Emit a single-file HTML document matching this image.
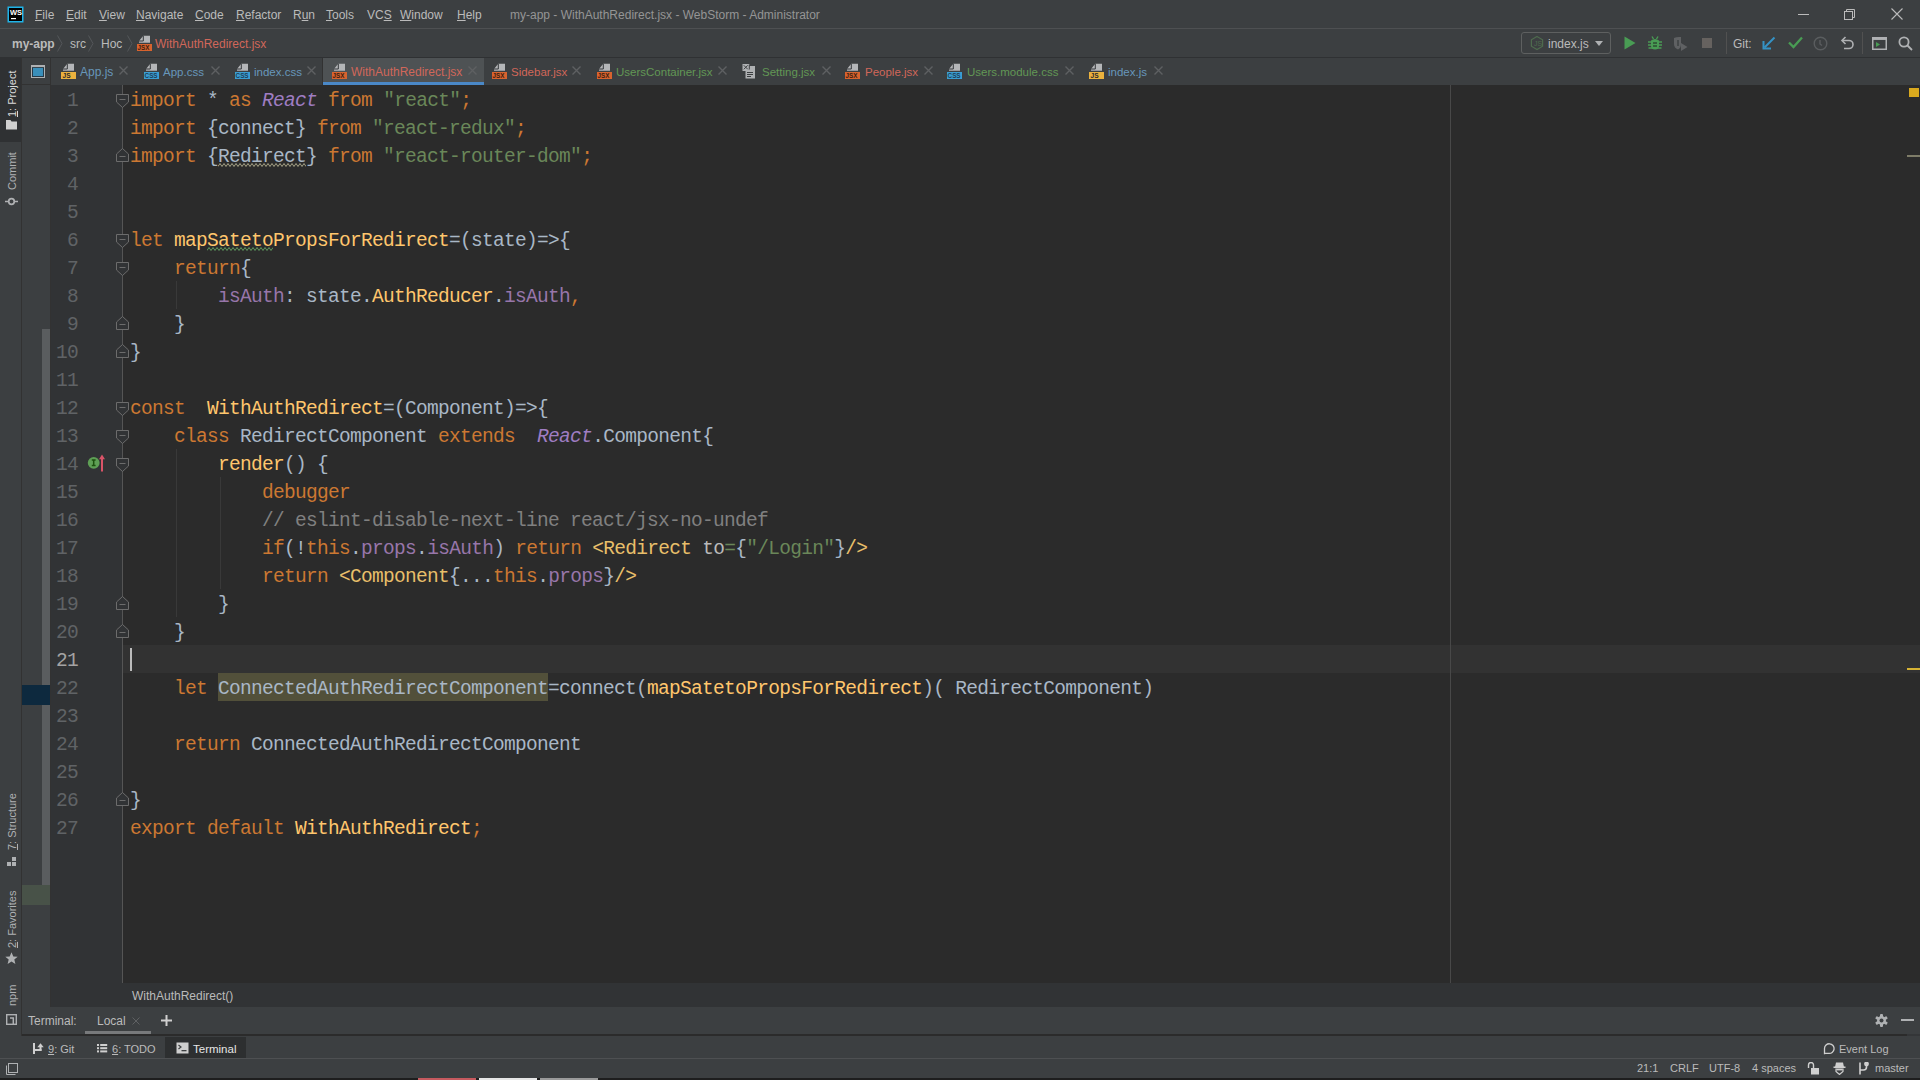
<!DOCTYPE html>
<html><head><meta charset="utf-8">
<style>
*{margin:0;padding:0;box-sizing:border-box}
html,body{width:1920px;height:1080px;overflow:hidden;background:#3C3F41}
body{position:relative;font-family:"Liberation Sans",sans-serif;font-size:12px;color:#BBBBBB}
.a{position:absolute}
.t{position:absolute;white-space:pre;line-height:16px}
#code{position:absolute;left:130px;top:87px;font-family:"Liberation Mono",monospace;font-size:19.5px;letter-spacing:-0.7px;line-height:28px;white-space:pre;color:#A9B7C6}
#nums{position:absolute;left:52px;width:26px;top:87px;font-family:"Liberation Mono",monospace;font-size:19.5px;letter-spacing:-0.7px;line-height:28px;white-space:pre;color:#606366;text-align:right}
.k{color:#CC7832}.f{color:#FFC66D}.s{color:#6A8759}.p{color:#9876AA}.r{color:#9F7DC2;font-style:italic}.c{color:#808080}.g{color:#E8BF6A}.at{color:#BABABA}
.tab{position:absolute;top:57px;height:27px}
.tt{position:absolute;top:64px;white-space:pre;line-height:16px;font-size:11.5px}
.x{position:absolute;top:66px;width:9px;height:9px}
</style></head><body>

<!-- title bar -->
<div class="a" style="left:0;top:0;width:1920px;height:28px;background:#3C3F41"></div>
<div class="a" style="left:0;top:28px;width:1920px;height:1px;background:#4E5052"></div>

<!-- nav bar -->
<div class="a" style="left:0;top:57px;width:1920px;height:1px;background:#2F3133"></div>

<!-- left tool strip -->
<div class="a" style="left:0;top:58px;width:21px;height:978px;background:#3C3F41"></div>
<div class="a" style="left:21px;top:58px;width:1px;height:978px;background:#323232"></div>
<div class="a" style="left:0;top:58px;width:21px;height:84px;background:#2F3133"></div>

<!-- project panel (narrow) -->
<div class="a" style="left:22px;top:58px;width:29px;height:949px;background:#3C3F41"></div>
<div class="a" style="left:50px;top:58px;width:1px;height:949px;background:#323232"></div>
<div class="a" style="left:22px;top:84px;width:28px;height:1px;background:#323232"></div>
<div class="a" style="left:42px;top:329px;width:8px;height:558px;background:#5A5D5F"></div>
<div class="a" style="left:22px;top:685px;width:28px;height:20px;background:#0D293E"></div>
<div class="a" style="left:22px;top:885px;width:28px;height:20px;background:#485248"></div>

<!-- tab bar -->
<div class="a" style="left:51px;top:58px;width:1869px;height:27px;background:#3C3F41"></div>
<div class="a" style="left:323px;top:58px;width:161px;height:27px;background:#4E5254"></div>
<div class="a" style="left:322px;top:58px;width:1px;height:27px;background:#323232"></div>
<div class="a" style="left:323px;top:82px;width:161px;height:3px;background:#4A88C7"></div>

<!-- gutter -->
<div class="a" style="left:51px;top:85px;width:71px;height:898px;background:#313335"></div>
<div class="a" style="left:122px;top:85px;width:1px;height:898px;background:#555555"></div>
<!-- editor -->
<div class="a" style="left:123px;top:85px;width:1797px;height:898px;background:#2B2B2B"></div>
<div class="a" style="left:123px;top:645px;width:1797px;height:28px;background:#323232"></div>
<div class="a" style="left:218px;top:673px;width:330px;height:28px;background:#52503A"></div>
<div class="a" style="left:1450px;top:85px;width:1px;height:898px;background:#484848"></div>

<!-- breadcrumb bar -->
<div class="a" style="left:51px;top:983px;width:1869px;height:24px;background:#313335"></div>

<!-- terminal header -->
<div class="a" style="left:22px;top:1007px;width:1898px;height:27px;background:#3C3F41"></div>
<div class="a" style="left:22px;top:1034px;width:1885px;height:2px;background:#2B2B2B"></div><div class="a" style="left:1907px;top:1034px;width:13px;height:2px;background:#343638"></div>
<!-- tool window bar -->
<div class="a" style="left:0;top:1036px;width:1920px;height:22px;background:#3C3F41"></div>
<div class="a" style="left:165px;top:1037px;width:81px;height:21px;background:#2D2F30"></div>
<!-- status bar -->
<div class="a" style="left:0;top:1058px;width:1920px;height:1px;background:#4E5052"></div>
<div class="a" style="left:0;top:1078px;width:1920px;height:2px;background:#1E1E1E"></div>


<svg class="a" style="left:116px;top:94px" width="13" height="14" viewBox="0 0 13 14"><path d="M0.5 0.5H12.5V8L6.5 13.5L0.5 8Z" fill="#313335" stroke="#6C6C6C"/><path d="M3.5 5.5H9.5" stroke="#6C6C6C"/></svg>
<svg class="a" style="left:116px;top:234px" width="13" height="14" viewBox="0 0 13 14"><path d="M0.5 0.5H12.5V8L6.5 13.5L0.5 8Z" fill="#313335" stroke="#6C6C6C"/><path d="M3.5 5.5H9.5" stroke="#6C6C6C"/></svg>
<svg class="a" style="left:116px;top:262px" width="13" height="14" viewBox="0 0 13 14"><path d="M0.5 0.5H12.5V8L6.5 13.5L0.5 8Z" fill="#313335" stroke="#6C6C6C"/><path d="M3.5 5.5H9.5" stroke="#6C6C6C"/></svg>
<svg class="a" style="left:116px;top:402px" width="13" height="14" viewBox="0 0 13 14"><path d="M0.5 0.5H12.5V8L6.5 13.5L0.5 8Z" fill="#313335" stroke="#6C6C6C"/><path d="M3.5 5.5H9.5" stroke="#6C6C6C"/></svg>
<svg class="a" style="left:116px;top:430px" width="13" height="14" viewBox="0 0 13 14"><path d="M0.5 0.5H12.5V8L6.5 13.5L0.5 8Z" fill="#313335" stroke="#6C6C6C"/><path d="M3.5 5.5H9.5" stroke="#6C6C6C"/></svg>
<svg class="a" style="left:116px;top:458px" width="13" height="14" viewBox="0 0 13 14"><path d="M0.5 0.5H12.5V8L6.5 13.5L0.5 8Z" fill="#313335" stroke="#6C6C6C"/><path d="M3.5 5.5H9.5" stroke="#6C6C6C"/></svg>
<svg class="a" style="left:116px;top:148px" width="13" height="14" viewBox="0 0 13 14"><path d="M0.5 13.5H12.5V6L6.5 0.5L0.5 6Z" fill="#313335" stroke="#6C6C6C"/><path d="M3.5 8.5H9.5" stroke="#6C6C6C"/></svg>
<svg class="a" style="left:116px;top:316px" width="13" height="14" viewBox="0 0 13 14"><path d="M0.5 13.5H12.5V6L6.5 0.5L0.5 6Z" fill="#313335" stroke="#6C6C6C"/><path d="M3.5 8.5H9.5" stroke="#6C6C6C"/></svg>
<svg class="a" style="left:116px;top:344px" width="13" height="14" viewBox="0 0 13 14"><path d="M0.5 13.5H12.5V6L6.5 0.5L0.5 6Z" fill="#313335" stroke="#6C6C6C"/><path d="M3.5 8.5H9.5" stroke="#6C6C6C"/></svg>
<svg class="a" style="left:116px;top:596px" width="13" height="14" viewBox="0 0 13 14"><path d="M0.5 13.5H12.5V6L6.5 0.5L0.5 6Z" fill="#313335" stroke="#6C6C6C"/><path d="M3.5 8.5H9.5" stroke="#6C6C6C"/></svg>
<svg class="a" style="left:116px;top:624px" width="13" height="14" viewBox="0 0 13 14"><path d="M0.5 13.5H12.5V6L6.5 0.5L0.5 6Z" fill="#313335" stroke="#6C6C6C"/><path d="M3.5 8.5H9.5" stroke="#6C6C6C"/></svg>
<svg class="a" style="left:116px;top:792px" width="13" height="14" viewBox="0 0 13 14"><path d="M0.5 13.5H12.5V6L6.5 0.5L0.5 6Z" fill="#313335" stroke="#6C6C6C"/><path d="M3.5 8.5H9.5" stroke="#6C6C6C"/></svg>
<div class="a" style="left:176px;top:281px;width:1px;height:28px;background:#393939"></div>
<div class="a" style="left:176px;top:449px;width:1px;height:168px;background:#393939"></div>
<div class="a" style="left:220px;top:477px;width:1px;height:112px;background:#393939"></div>
<div id="nums">1
2
3
4
5
6
7
8
9
10
11
12
13
14
15
16
17
18
19
20
<span style="color:#A4A3A3">21</span>
22
23
24
25
26
27</div>

<div id="code"><span class="k">import</span> * <span class="k">as</span> <span class="r">React</span> <span class="k">from</span> <span class="s">"react"</span><span class="k">;</span>
<span class="k">import</span> {connect} <span class="k">from</span> <span class="s">"react-redux"</span><span class="k">;</span>
<span class="k">import</span> {Redirect} <span class="k">from</span> <span class="s">"react-router-dom"</span><span class="k">;</span>


<span class="k">let</span> <span class="f">mapSatetoPropsForRedirect</span>=(state)=>{
    <span class="k">return</span>{
        <span class="p">isAuth</span>: state.<span class="f">AuthReducer</span>.<span class="p">isAuth</span><span class="k">,</span>
    }
}

<span class="k">const</span>  <span class="f">WithAuthRedirect</span>=(Component)=>{
    <span class="k">class</span> RedirectComponent <span class="k">extends</span>  <span class="r">React</span>.Component{
        <span class="f">render</span>() {
            <span class="k">debugger</span>
            <span class="c">// eslint-disable-next-line react/jsx-no-undef</span>
            <span class="k">if</span>(!<span class="k">this</span>.<span class="p">props</span>.<span class="p">isAuth</span>) <span class="k">return</span> <span class="g">&lt;Redirect</span> <span class="at">to</span><span class="s">=</span>{<span class="s">"/Login"</span>}<span class="g">/&gt;</span>
            <span class="k">return</span> <span class="g">&lt;Component</span>{...<span class="k">this</span>.<span class="p">props</span>}<span class="g">/&gt;</span>
        }
    }

    <span class="k">let</span> ConnectedAuthRedirectComponent=connect(<span class="f">mapSatetoPropsForRedirect</span>)( RedirectComponent)

    <span class="k">return</span> ConnectedAuthRedirectComponent

}
<span class="k">export default</span> <span class="f">WithAuthRedirect</span><span class="k">;</span></div>

<!-- ============ SYMBOLS ============ -->
<svg width="0" height="0" style="position:absolute">
<defs>
<symbol id="page" viewBox="0 0 16 16"><path d="M7.3 0.8H14V7.8H3V6Z" fill="#B4B6B8"/><path d="M7.3 0.8V6H3" fill="none" stroke="#34373A" stroke-width="1"/></symbol>
<symbol id="ijs" viewBox="0 0 16 16"><use href="#page"/><rect x="1" y="9" width="15" height="7" fill="#EAB13E"/><text x="2.6" y="15.3" font-family="Liberation Sans" font-weight="bold" font-size="6.6" fill="#2B2B2B">JS</text></symbol>
<symbol id="icss" viewBox="0 0 16 16"><use href="#page"/><rect x="1" y="9" width="15" height="7" fill="#3A9DD3"/><text x="1.6" y="15.3" font-family="Liberation Sans" font-weight="bold" font-size="6.3" fill="#1E3F57">CSS</text></symbol>
<symbol id="ijsx" viewBox="0 0 16 16"><use href="#page"/><rect x="1" y="9" width="15" height="7" fill="#D8632E"/><text x="1.6" y="15.3" font-family="Liberation Sans" font-weight="bold" font-size="6.3" fill="#3B1D10">JSX</text></symbol>
<symbol id="ixcl" viewBox="0 0 16 16"><rect x="4.5" y="3" width="9.5" height="12.5" fill="#AFB1B3"/><rect x="1.5" y="1" width="7" height="7" fill="#AFB1B3"/><path d="M2.8 2.3L6.8 6.3M6.8 2.3L2.8 6.3" stroke="#3C3F41" stroke-width="1"/><path d="M8.3 1.5V6.5M6 9.5H12M6 11.5H12M6 13.5H10" stroke="#3C3F41" stroke-width="1"/></symbol>
<symbol id="cls" viewBox="0 0 9 9"><path d="M0.5 0.5L8.5 8.5M8.5 0.5L0.5 8.5" stroke="#5E6062" stroke-width="1.4"/></symbol>
</defs>
</svg>

<!-- ============ TAB BAR ============ -->
<svg class="a" style="left:31px;top:65px" width="14" height="13" viewBox="0 0 14 13"><rect x="0.5" y="0.5" width="13" height="12" fill="#263A48" stroke="#AFB1B3" stroke-width="1"/><rect x="0.5" y="0.5" width="13" height="1.6" fill="#AFB1B3"/><rect x="2" y="3" width="10" height="8" fill="#3A8FBA"/></svg>
<div class="a" style="left:50px;top:58px;width:1px;height:27px;background:#323232"></div>

<svg class="a" style="left:60px;top:63px" width="16" height="16"><use href="#ijs"/></svg>
<div class="tt" style="left:80px;color:#6897BB;font-size:12px">App.js</div>
<svg class="x" style="left:119px"><use href="#cls"/></svg>

<svg class="a" style="left:143px;top:63px" width="16" height="16"><use href="#icss"/></svg>
<div class="tt" style="left:163px;color:#6897BB">App.css</div>
<svg class="x" style="left:211px"><use href="#cls"/></svg>

<svg class="a" style="left:234px;top:63px" width="16" height="16"><use href="#icss"/></svg>
<div class="tt" style="left:254px;color:#6897BB">index.css</div>
<svg class="x" style="left:307px"><use href="#cls"/></svg>

<svg class="a" style="left:331px;top:63px" width="16" height="16"><use href="#ijsx"/></svg>
<div class="tt" style="left:351px;color:#D1675A;font-size:12px">WithAuthRedirect.jsx</div>
<svg class="x" style="left:468px"><use href="#cls"/></svg>

<svg class="a" style="left:491px;top:63px" width="16" height="16"><use href="#ijsx"/></svg>
<div class="tt" style="left:511px;color:#D1675A">Sidebar.jsx</div>
<svg class="x" style="left:572px"><use href="#cls"/></svg>

<svg class="a" style="left:596px;top:63px" width="16" height="16"><use href="#ijsx"/></svg>
<div class="tt" style="left:616px;color:#629755">UsersContainer.jsx</div>
<svg class="x" style="left:718px"><use href="#cls"/></svg>

<svg class="a" style="left:741px;top:63px" width="16" height="16"><use href="#ixcl"/></svg>
<div class="tt" style="left:762px;color:#629755">Setting.jsx</div>
<svg class="x" style="left:822px"><use href="#cls"/></svg>

<svg class="a" style="left:844px;top:63px" width="16" height="16"><use href="#ijsx"/></svg>
<div class="tt" style="left:865px;color:#D1675A">People.jsx</div>
<svg class="x" style="left:924px"><use href="#cls"/></svg>

<svg class="a" style="left:946px;top:63px" width="16" height="16"><use href="#icss"/></svg>
<div class="tt" style="left:967px;color:#629755">Users.module.css</div>
<svg class="x" style="left:1065px"><use href="#cls"/></svg>

<svg class="a" style="left:1088px;top:63px" width="16" height="16"><use href="#ijs"/></svg>
<div class="tt" style="left:1108px;color:#6897BB">index.js</div>
<svg class="x" style="left:1154px"><use href="#cls"/></svg>
<!-- ============ TITLE BAR ============ -->
<svg class="a" style="left:7px;top:6px" width="17" height="17" viewBox="0 0 17 17">
<rect x="0.5" y="0.5" width="16" height="16" fill="#1FB3E8"/>
<rect x="2" y="2" width="13" height="13" fill="#000"/>
<text x="3" y="9.3" font-family="Liberation Sans" font-weight="bold" font-size="7.5" fill="#fff">WS</text>
<rect x="4" y="12" width="5" height="1.2" fill="#fff"/>
</svg>
<div class="t" style="left:35px;top:7px"><u>F</u>ile</div>
<div class="t" style="left:66px;top:7px"><u>E</u>dit</div>
<div class="t" style="left:99px;top:7px"><u>V</u>iew</div>
<div class="t" style="left:136px;top:7px"><u>N</u>avigate</div>
<div class="t" style="left:195px;top:7px"><u>C</u>ode</div>
<div class="t" style="left:236px;top:7px"><u>R</u>efactor</div>
<div class="t" style="left:293px;top:7px">R<u>u</u>n</div>
<div class="t" style="left:326px;top:7px"><u>T</u>ools</div>
<div class="t" style="left:367px;top:7px">VC<u>S</u></div>
<div class="t" style="left:400px;top:7px"><u>W</u>indow</div>
<div class="t" style="left:457px;top:7px"><u>H</u>elp</div>
<div class="t" style="left:510px;top:7px;color:#959595">my-app - WithAuthRedirect.jsx - WebStorm - Administrator</div>
<div class="a" style="left:1798px;top:14px;width:11px;height:1px;background:#BBBBBB"></div>
<svg class="a" style="left:1844px;top:9px" width="12" height="12" viewBox="0 0 12 12" fill="none" stroke="#BBBBBB" stroke-width="1"><rect x="0.5" y="2.5" width="8" height="8"/><path d="M2.5 2.5V0.5H10.5V8.5H8.5"/></svg>
<svg class="a" style="left:1891px;top:8px" width="12" height="12" viewBox="0 0 12 12" stroke="#BBBBBB" stroke-width="1.1"><path d="M0.5 0.5L11.5 11.5M11.5 0.5L0.5 11.5"/></svg>

<!-- ============ NAV BAR ============ -->
<div class="t" style="left:12px;top:36px;font-weight:bold">my-app</div>
<svg class="a" style="left:57px;top:35px" width="6" height="17" viewBox="0 0 6 17" fill="none" stroke="#54575A"><path d="M0.5 0.5L5 8.5L0.5 16.5"/></svg>
<div class="t" style="left:70px;top:36px">src</div>
<svg class="a" style="left:88px;top:35px" width="6" height="17" viewBox="0 0 6 17" fill="none" stroke="#54575A"><path d="M0.5 0.5L5 8.5L0.5 16.5"/></svg>
<div class="t" style="left:101px;top:36px">Hoc</div>
<svg class="a" style="left:127px;top:35px" width="6" height="17" viewBox="0 0 6 17" fill="none" stroke="#54575A"><path d="M0.5 0.5L5 8.5L0.5 16.5"/></svg>
<svg class="a" style="left:136px;top:35px" width="16" height="16"><use href="#ijsx"/></svg>
<div class="t" style="left:155px;top:36px;color:#D1675A">WithAuthRedirect.jsx</div>

<!-- run config combo -->
<div class="a" style="left:1521px;top:32px;width:90px;height:22px;border:1px solid #5E6060;border-radius:3px"></div>
<svg class="a" style="left:1529px;top:35px" width="16" height="16" viewBox="0 0 16 16" fill="none" stroke="#4E6B4E" stroke-width="1.2"><path d="M8 1.5L13.6 4.75V11.25L8 14.5L2.4 11.25V4.75Z"/><text x="5" y="11" font-size="7" fill="#4E6B4E" stroke="none" font-family="Liberation Sans">JS</text></svg>
<div class="t" style="left:1548px;top:36px">index.js</div>
<svg class="a" style="left:1595px;top:41px" width="8" height="6" viewBox="0 0 8 6"><path d="M0 0H8L4 5Z" fill="#AFB1B3"/></svg>
<!-- run -->
<svg class="a" style="left:1623px;top:36px" width="14" height="14" viewBox="0 0 14 14"><path d="M1.5 0.5L12.5 7L1.5 13.5Z" fill="#499C54"/></svg>
<!-- debug bug -->
<svg class="a" style="left:1648px;top:36px" width="14" height="14" viewBox="0 0 14 14"><path d="M4 0.5L5.5 3M10 0.5L8.5 3" stroke="#499C54" stroke-width="1.4"/><path d="M3 4.5Q7 1.5 11 4.5V10Q11 13.5 7 13.5Q3 13.5 3 10Z" fill="#499C54"/><path d="M0 6H14M0 9H14M0.5 12H13.5" stroke="#499C54" stroke-width="1.3"/><path d="M0 7.5H2.8M11.2 7.5H14M0 10.5H2.8M11.2 10.5H14" stroke="#3C3F41" stroke-width="1.2"/><rect x="5" y="6.3" width="4" height="1.4" fill="#2C4A30"/><rect x="5" y="9.3" width="4" height="1.4" fill="#2C4A30"/></svg>
<!-- coverage (gray) -->
<svg class="a" style="left:1673px;top:36px" width="16" height="16" viewBox="0 0 16 16"><path d="M1 2Q4 0.5 8 1V8Q8 12 5 13.5Q1 12 1 8Z" fill="#5F6163"/><path d="M5 4V10" stroke="#3C3F41" stroke-width="1.4"/><path d="M8 7L14.5 11L8 15Z" fill="#5F6163"/></svg>
<!-- stop -->
<div class="a" style="left:1702px;top:38px;width:10px;height:10px;background:#66625F"></div>
<div class="a" style="left:1726px;top:32px;width:1px;height:22px;background:#515151"></div>
<div class="t" style="left:1733px;top:36px">Git:</div>
<!-- update arrow -->
<svg class="a" style="left:1762px;top:36px" width="14" height="14" viewBox="0 0 14 14" fill="none" stroke="#3592C4" stroke-width="2"><path d="M12.5 1.5L2.5 11.5"/><path d="M1.5 5V12.5H9" stroke-linejoin="miter"/></svg>
<!-- commit check -->
<svg class="a" style="left:1788px;top:36px" width="15" height="13" viewBox="0 0 15 13" fill="none" stroke="#499C54" stroke-width="2.3"><path d="M1 6.5L5.5 11L14 1.5"/></svg>
<!-- history clock gray -->
<svg class="a" style="left:1813px;top:36px" width="15" height="15" viewBox="0 0 15 15" fill="none" stroke="#5A5D5F" stroke-width="1.4"><circle cx="7.5" cy="7.5" r="6.3"/><path d="M7 4V8L9 9.5"/></svg>
<!-- rollback -->
<svg class="a" style="left:1840px;top:36px" width="15" height="15" viewBox="0 0 15 15" fill="none" stroke="#AFB1B3" stroke-width="1.6"><path d="M3 4.5H9A4 4 0 0 1 9 12.5H4"/><path d="M5.5 1L2 4.5L5.5 8"/></svg>
<div class="a" style="left:1862px;top:32px;width:1px;height:22px;background:#515151"></div>
<!-- run anything / terminal window -->
<svg class="a" style="left:1872px;top:37px" width="15" height="13" viewBox="0 0 15 13"><rect x="0.75" y="0.75" width="13.5" height="11.5" fill="none" stroke="#AFB1B3" stroke-width="1.5"/><rect x="0.75" y="0.75" width="13.5" height="2.2" fill="#AFB1B3"/><path d="M4 5L8 7.5L4 10Z" fill="#499C54"/></svg>
<!-- search -->
<svg class="a" style="left:1898px;top:36px" width="15" height="15" viewBox="0 0 15 15" fill="none" stroke="#AFB1B3" stroke-width="1.8"><circle cx="6" cy="6" r="4.6"/><path d="M9.5 9.5L14 14"/></svg>
<!-- ============ LEFT STRIP LABELS ============ -->
<div class="t" style="left:4px;top:117px;font-size:11px;color:#DADADA;transform-origin:0 0;transform:rotate(-90deg)"><u>1</u>: Project</div>
<svg class="a" style="left:6px;top:119px" width="11" height="11" viewBox="0 0 11 11"><path d="M0 1H4.5L5.5 2.5H11V10.5H0Z" fill="#D0D0D0"/></svg>
<div class="t" style="left:4px;top:190px;font-size:11px;color:#AFB1B3;transform-origin:0 0;transform:rotate(-90deg)">Commit</div>
<svg class="a" style="left:5px;top:197px" width="13" height="9" viewBox="0 0 13 9" fill="none" stroke="#AFB1B3" stroke-width="1.7"><path d="M0 4.5H3.6M9.4 4.5H13"/><circle cx="6.5" cy="4.5" r="2.8"/></svg>
<div class="t" style="left:4px;top:850px;font-size:11px;color:#AFB1B3;transform-origin:0 0;transform:rotate(-90deg)"><u>7</u>: Structure</div>
<svg class="a" style="left:7px;top:857px" width="10" height="10" viewBox="0 0 10 10" fill="#AFB1B3"><rect x="0" y="5" width="4" height="4"/><rect x="5" y="5" width="4" height="4"/><rect x="5" y="0" width="4" height="4"/></svg>
<div class="t" style="left:4px;top:948px;font-size:11px;color:#AFB1B3;transform-origin:0 0;transform:rotate(-90deg)"><u>2</u>: Favorites</div>
<svg class="a" style="left:5px;top:952px" width="13" height="13" viewBox="0 0 13 13"><path d="M6.5 0.3L8.3 4.4L12.7 4.7L9.3 7.6L10.4 12L6.5 9.6L2.6 12L3.7 7.6L0.3 4.7L4.7 4.4Z" fill="#AFB1B3"/></svg>
<div class="t" style="left:4px;top:1006px;font-size:11px;color:#AFB1B3;transform-origin:0 0;transform:rotate(-90deg)">npm</div>
<svg class="a" style="left:6px;top:1014px" width="11" height="11" viewBox="0 0 11 11" fill="none" stroke="#AFB1B3" stroke-width="1.4"><rect x="0.7" y="0.7" width="9.6" height="9.6"/><path d="M4 4H7.3V10.3" stroke-width="1.5"/></svg>

<!-- ============ EDITOR EXTRAS ============ -->
<!-- wavy underlines -->
<svg class="a" style="left:218px;top:163px" width="88" height="4" viewBox="0 0 88 4"><path d="M0 3.5 L2 0.5 L4 3.5 L6 0.5 L8 3.5 L10 0.5 L12 3.5 L14 0.5 L16 3.5 L18 0.5 L20 3.5 L22 0.5 L24 3.5 L26 0.5 L28 3.5 L30 0.5 L32 3.5 L34 0.5 L36 3.5 L38 0.5 L40 3.5 L42 0.5 L44 3.5 L46 0.5 L48 3.5 L50 0.5 L52 3.5 L54 0.5 L56 3.5 L58 0.5 L60 3.5 L62 0.5 L64 3.5 L66 0.5 L68 3.5 L70 0.5 L72 3.5 L74 0.5 L76 3.5 L78 0.5 L80 3.5 L82 0.5 L84 3.5 L86 0.5 L88 3.5" fill="none" stroke="#A6A287" stroke-width="1"/></svg>
<svg class="a" style="left:207px;top:247px" width="66" height="4" viewBox="0 0 66 4"><path d="M0 3.5 L2 0.5 L4 3.5 L6 0.5 L8 3.5 L10 0.5 L12 3.5 L14 0.5 L16 3.5 L18 0.5 L20 3.5 L22 0.5 L24 3.5 L26 0.5 L28 3.5 L30 0.5 L32 3.5 L34 0.5 L36 3.5 L38 0.5 L40 3.5 L42 0.5 L44 3.5 L46 0.5 L48 3.5 L50 0.5 L52 3.5 L54 0.5 L56 3.5 L58 0.5 L60 3.5 L62 0.5 L64 3.5 L66 0.5" fill="none" stroke="#5F9A5F" stroke-width="1"/></svg>
<!-- gutter icons line 14 -->
<svg class="a" style="left:87px;top:454px" width="20" height="19" viewBox="0 0 20 19"><circle cx="6.7" cy="8.8" r="5.9" fill="#5E9F55"/><path d="M4.8 6H8.6M4.8 11.6H8.6M6.7 6V11.6" stroke="#1D5210" stroke-width="1.5"/><path d="M15 17.5V3" stroke="#D95468" stroke-width="2"/><path d="M12 5.2L15 0.5L18 5.2Z" fill="#D95468"/></svg>
<!-- caret -->
<div class="a" style="left:130px;top:648px;width:2px;height:23px;background:#BBBBBB"></div>
<!-- right error stripe markers -->
<div class="a" style="left:1909px;top:88px;width:10px;height:9px;background:#D9A91E"></div>
<div class="a" style="left:1907px;top:155px;width:13px;height:2px;background:#7E7C68"></div>
<div class="a" style="left:1907px;top:668px;width:13px;height:2px;background:#D6B334"></div>

<!-- ============ BREADCRUMB BAR ============ -->
<div class="t" style="left:132px;top:988px">WithAuthRedirect()</div>

<!-- ============ TERMINAL HEADER ============ -->
<div class="t" style="left:28px;top:1013px">Terminal:</div>
<div class="t" style="left:97px;top:1013px">Local</div>
<svg class="a" style="left:132px;top:1017px" width="8" height="8" viewBox="0 0 8 8"><path d="M0.5 0.5L7.5 7.5M7.5 0.5L0.5 7.5" stroke="#5F6163" stroke-width="1"/></svg>
<div class="a" style="left:85px;top:1031px;width:66px;height:3px;background:#787A7C"></div>
<svg class="a" style="left:161px;top:1015px" width="11" height="11" viewBox="0 0 11 11"><path d="M5.5 0V11M0 5.5H11" stroke="#D0D0D0" stroke-width="2"/></svg>
<!-- gear -->
<svg class="a" style="left:1875px;top:1014px" width="13" height="13" viewBox="0 0 13 13"><g fill="#AFB1B3"><circle cx="6.5" cy="6.5" r="4.4"/><rect x="5" y="0" width="3" height="13" rx="1"/><rect x="5" y="0" width="3" height="13" rx="1" transform="rotate(60 6.5 6.5)"/><rect x="5" y="0" width="3" height="13" rx="1" transform="rotate(-60 6.5 6.5)"/></g><circle cx="6.5" cy="6.5" r="2" fill="#3C3F41"/></svg>
<div class="a" style="left:1901px;top:1019px;width:13px;height:2px;background:#AFB1B3"></div>

<!-- ============ TOOL WINDOW BAR ============ -->
<svg class="a" style="left:32px;top:1042px" width="12" height="12" viewBox="0 0 12 12" fill="#CFCFCF"><rect x="1" y="1" width="2" height="11"/><rect x="1" y="7" width="8.5" height="2"/><rect x="7.5" y="4" width="2" height="5"/><path d="M5.3 5.2L8.5 1.3L11.7 5.2Z"/></svg>
<div class="t" style="left:48px;top:1041px;font-size:11px"><u>9</u>: Git</div>
<svg class="a" style="left:96px;top:1043px" width="12" height="10" viewBox="0 0 12 10" fill="#CFCFCF"><rect x="1" y="1" width="2" height="2"/><rect x="1" y="4.2" width="2" height="2"/><rect x="1" y="7.4" width="2" height="2"/><rect x="4.2" y="1" width="7" height="2"/><rect x="4.2" y="4.2" width="7" height="2"/><rect x="4.2" y="7.4" width="7" height="2"/></svg>
<div class="t" style="left:112px;top:1041px;font-size:11px"><u>6</u>: TODO</div>
<svg class="a" style="left:176px;top:1042px" width="13" height="12" viewBox="0 0 13 12"><rect x="0.5" y="0.5" width="12" height="11" fill="#CFCFCF"/><path d="M2.5 3L5 5L2.5 7" fill="none" stroke="#3C3F41" stroke-width="1.2"/><rect x="5.5" y="8" width="5" height="1.3" fill="#3C3F41"/></svg>
<div class="t" style="left:193px;top:1041px;color:#E6E6E6;font-size:11.5px">Terminal</div>
<!-- event log -->
<svg class="a" style="left:1822px;top:1042px" width="13" height="13" viewBox="0 0 13 13" fill="none" stroke="#CFCFCF" stroke-width="1.3"><path d="M2.5 12.2 V6.5 A4.8 4.8 0 1 1 6.5 11.3 H2.5"/></svg>
<div class="t" style="left:1839px;top:1041px;font-size:11px">Event Log</div>

<!-- ============ STATUS BAR ============ -->
<svg class="a" style="left:6px;top:1063px" width="12" height="12" viewBox="0 0 12 12" fill="none" stroke="#AFB1B3" stroke-width="1"><rect x="2.5" y="0.5" width="9" height="9"/><path d="M0.5 2.5V11.5H9.5"/></svg>
<div class="t" style="left:1637px;top:1060px;font-size:11px">21:1</div>
<div class="t" style="left:1670px;top:1060px;font-size:11px">CRLF</div>
<div class="t" style="left:1709px;top:1060px;font-size:11px">UTF-8</div>
<div class="t" style="left:1752px;top:1060px;font-size:11px">4 spaces</div>
<svg class="a" style="left:1807px;top:1062px" width="13" height="13" viewBox="0 0 13 13"><path d="M1.5 6V3A2.5 2.5 0 0 1 6.5 3V6" fill="none" stroke="#CFCFCF" stroke-width="1.4"/><rect x="4" y="6" width="8" height="6.5" fill="#CFCFCF"/></svg>
<svg class="a" style="left:1833px;top:1062px" width="13" height="13" viewBox="0 0 13 13" fill="#CFCFCF"><path d="M3 0.5H10L11 5H2Z"/><rect x="0.5" y="4.5" width="12" height="1.5"/><path d="M3 7H10V9.5L6.5 12.5L3 9.5Z" fill="none" stroke="#CFCFCF" stroke-width="1.2"/><rect x="3.5" y="7" width="6" height="1.4"/></svg>
<svg class="a" style="left:1858px;top:1062px" width="11" height="13" viewBox="0 0 11 13" fill="none" stroke="#CFCFCF" stroke-width="1.6"><path d="M2 0.5V12.5"/><path d="M8.5 3V5A3 3 0 0 1 5.5 8H2"/><circle cx="8.5" cy="2" r="1.6" fill="#CFCFCF"/></svg>
<div class="t" style="left:1875px;top:1060px;font-size:11px">master</div>
<!-- taskbar remnants -->
<div class="a" style="left:418px;top:1078px;width:58px;height:2px;background:#C65A5F"></div>
<div class="a" style="left:479px;top:1078px;width:58px;height:2px;background:#E6E6E6"></div>
<div class="a" style="left:540px;top:1078px;width:58px;height:2px;background:#9A9A9A"></div>

</body></html>
